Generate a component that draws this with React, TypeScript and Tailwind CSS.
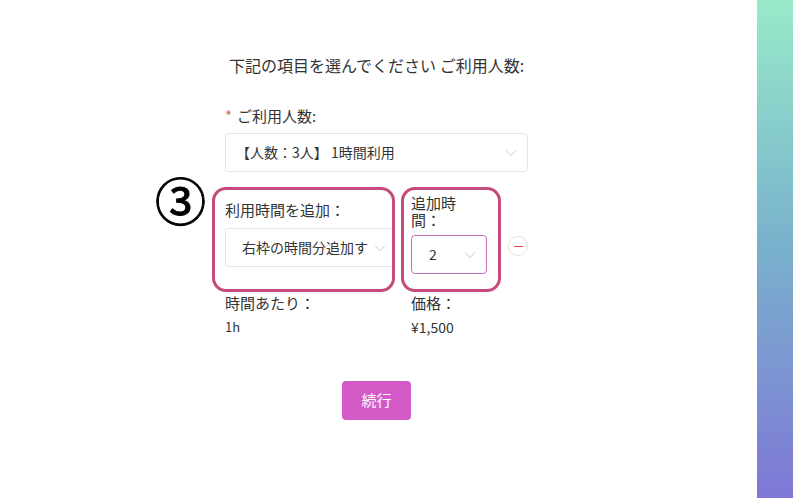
const Chevron = () => (
  <svg width="12" height="8" viewBox="0 0 12 8" className="shrink-0">
    <polyline points="1,1.5 6,6.5 11,1.5" fill="none" stroke="#c8c8c8" strokeWidth="1" />
  </svg>
);

const App = () => {
  return (
    <div
      className="flex h-[498px] w-[793px] overflow-hidden bg-white text-[#333]"
      style={{ fontFamily: '"Noto Sans CJK JP", "Noto Sans", sans-serif' }}
    >
      <div className="relative flex-1 pr-[4px]">
        <div className="mx-auto flex w-[303px] flex-col pt-[54px]">
          <h2 className="text-center text-[16px] leading-[22px] text-[#333]">
            下記の項目を選んでください ご利用人数:
          </h2>

          <label className="mt-[29px] flex items-center text-[15px] leading-[22px] text-[#333]">
            <span className="mr-[5px] text-[#e06a66]">*</span>
            ご利用人数:
          </label>
          <div className="mt-[6px] flex h-[39px] items-center justify-between rounded-[4px] border border-[#e3e3e3] pl-[10px] pr-[10px]">
            <span className="text-[14px] text-[#333]">【人数：3人】 1時間利用</span>
            <Chevron />
          </div>

          <div className="mt-[22px] flex">
            <div className="w-[170px] pt-[5px]">
              <div className="text-[15px] leading-[22px] text-[#333]">利用時間を追加：</div>
              <div className="mt-[7px] flex h-[39px] items-center justify-between rounded-[4px] border border-[#e3e3e3] pl-[16px] pr-[8px]">
                <span className="whitespace-nowrap text-[14px] text-[#333]">右枠の時間分追加す</span>
                <Chevron />
              </div>
            </div>
            <div className="ml-[16px] w-[76px]">
              <div className="text-[15px] leading-[17px] text-[#333]">
                追加時
                <br />
                間：
              </div>
              <div className="mt-[7px] flex h-[39px] items-center justify-between rounded-[4px] border border-[#c66ec4] pl-[17px] pr-[10px]">
                <span className="text-[14px] text-[#333]">2</span>
                <Chevron />
              </div>
            </div>
            <div className="ml-[21px] mt-[42px] flex h-[20px] w-[20px] items-center justify-center rounded-full border border-[#ecdede]">
              <span className="h-px w-[9px] bg-[#e0464a]" />
            </div>
          </div>

          <div className="mt-[18px] flex">
            <div className="w-[170px]">
              <div className="text-[15px] leading-[22px] text-[#333]">時間あたり：</div>
              <div className="mt-[3px] text-[13px] leading-[20px] text-[#333]">1h</div>
            </div>
            <div className="ml-[16px]">
              <div className="text-[15px] leading-[22px] text-[#333]">価格：</div>
              <div className="mt-[3px] text-[14px] leading-[20px] text-[#333]">¥1,500</div>
            </div>
          </div>

          <div className="mt-[44px] flex justify-center">
            <button className="h-[39px] w-[69px] rounded-[4px] bg-[#d45bc7] text-[15px] text-white">
              続行
            </button>
          </div>
        </div>

        {/* annotations */}
        <div className="absolute left-[155px] top-[169px] text-[51px] leading-[60px] text-black [-webkit-text-stroke:1px_black]">③</div>
        <div className="pointer-events-none absolute left-[212px] top-[187px] h-[105px] w-[183px] rounded-[14px] border-[3px] border-[#c54b7e]" />
        <div className="pointer-events-none absolute left-[401px] top-[187px] h-[105px] w-[100px] rounded-[14px] border-[3px] border-[#c54b7e]" />
      </div>
      <div className="w-[36px] bg-gradient-to-b from-[#98eac8] via-[#78b0cc] to-[#7e77d6]" />
    </div>
  );
};

export default App;
